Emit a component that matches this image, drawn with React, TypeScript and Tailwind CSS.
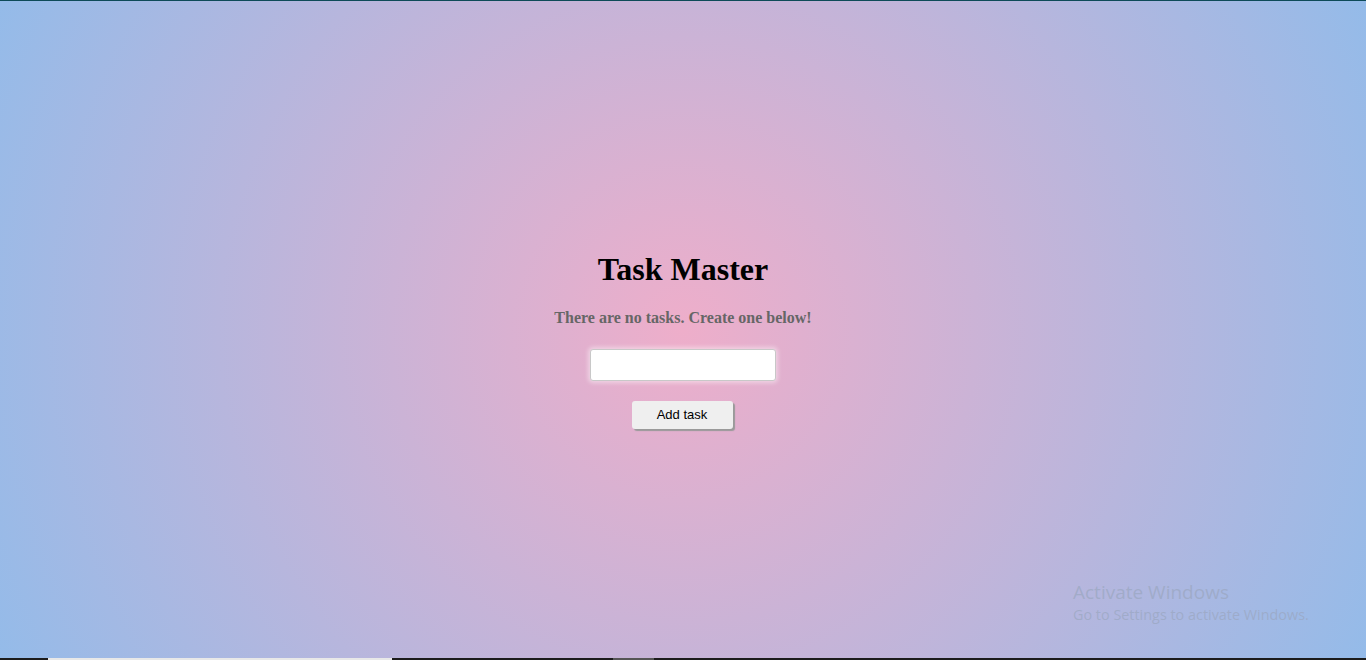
export default function App() {
  return (
    <div className="relative flex h-[660px] w-full flex-col overflow-hidden bg-[radial-gradient(circle,#eeaeca_0%,#94bbe9_100%)]">
      <div className="h-px w-full bg-[#0d4a58]" />
      <div className="flex flex-1 flex-col items-center pt-[250px]">
        <h1 className="font-['Liberation_Serif',serif] text-[32px] font-bold leading-[37px] text-black">
          Task Master
        </h1>
        <p className="mt-[21px] font-['Liberation_Serif',serif] text-[16px] font-bold leading-[18px] text-[#666666]">
          There are no tasks. Create one below!
        </p>
        <input
          type="text"
          className="mt-[22px] h-[32px] w-[186px] rounded-[3px] border border-[#c8c8c8] bg-white px-2 shadow-[0_0_4px_2px_rgba(255,255,255,0.45)] outline-none"
        />
        <button className="mr-[2px] mt-[20px] h-[28px] w-[101px] rounded-[3px] bg-[#efefef] font-['Liberation_Sans',sans-serif] text-[13px] text-black shadow-[2px_2px_1px_#9a9a9a]">
          Add task
        </button>
      </div>
      <div className="absolute bottom-[34px] left-[1073px] font-['Open_Sans',sans-serif] text-[#9aa6bf]/70">
        <div className="text-[19px] leading-[24px]">Activate Windows</div>
        <div className="text-[14.4px] leading-[22px]">Go to Settings to activate Windows.</div>
      </div>
      <div className="flex h-[2px] w-full bg-[#1c1c1c]">
        <div className="ml-[48px] w-[344px] bg-[#e8e8e8]" />
        <div className="ml-[221px] w-[41px] bg-[#555555]" />
      </div>
    </div>
  );
}
